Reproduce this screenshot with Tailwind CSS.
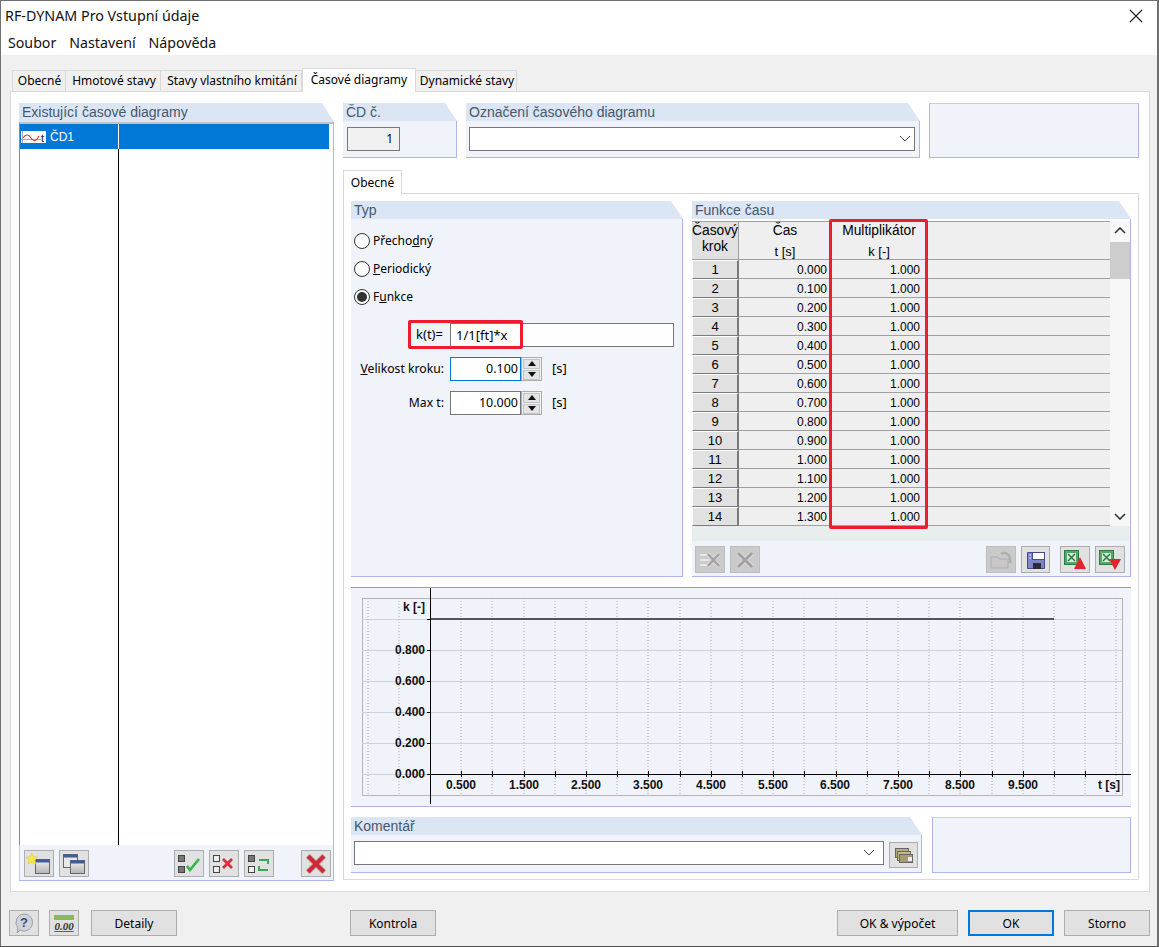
<!DOCTYPE html>
<html>
<head>
<meta charset="utf-8">
<title>RF-DYNAM Pro Vstupní údaje</title>
<script src="https://cdn.jsdelivr.net/npm/@tailwindcss/browser@4"></script>
</head>
<body class="bg-white">
<div class="w-[1159px] h-[947px] border-t border-l border-r-2 border-b border-t-[#707070] border-l-[#707070] border-r-[#707070] border-b-[#505050] flex flex-col font-['Noto_Sans',sans-serif] text-[12px] text-black overflow-hidden">

  <!-- title + menu -->
  <div class="h-[29px] shrink-0 flex items-center justify-between pl-1 pr-[14px] bg-white text-[14.3px] text-[#111]">
    <span>RF-DYNAM Pro Vstupní údaje</span>
    <svg width="14" height="14" viewBox="0 0 14 14"><path d="M1 1 13 13M13 1 1 13" stroke="#222" stroke-width="1.2"/></svg>
  </div>
  <div class="h-[25px] shrink-0 flex items-center gap-[13px] pl-[7px] bg-white text-[14.2px] text-[#111]">
    <span>Soubor</span><span>Nastavení</span><span>Nápověda</span>
  </div>

  <div class="flex-1 bg-[#f0f0f0] flex flex-col pl-[9px] pr-[7px]">
    <!-- main tabs -->
    <div class="h-[36px] shrink-0 flex items-end pl-[2px] relative z-10">
      <div class="h-[21px] w-[54px] flex items-center justify-center pl-px bg-[#f0f0f0] border border-[#d9d9d9] border-b-0">Obecné</div>
      <div class="h-[21px] w-[95px] flex items-center justify-center pl-[2px] bg-[#f0f0f0] border border-l-0 border-[#d9d9d9] border-b-0">Hmotové stavy</div>
      <div class="h-[21px] w-[141px] flex items-center justify-center pl-[2px] bg-[#f0f0f0] border border-l-0 border-[#d9d9d9] border-b-0">Stavy vlastního kmitání</div>
      <div class="h-[24px] w-[114px] -mb-px flex items-start pt-[2px] justify-center bg-white border border-[#d9d9d9] border-b-0">Časové diagramy</div>
      <div class="h-[21px] w-[101px] flex items-center justify-center pl-[2px] bg-[#f0f0f0] border border-l-0 border-[#d9d9d9] border-b-0">Dynamické stavy</div>
    </div>

    <!-- main pane -->
    <div class="h-[801px] w-[1140px] shrink-0 bg-white border border-[#d9d9d9] flex gap-[9px] pl-2 pt-[11px]">

      <!-- left column -->
      <div class="w-[315px] h-[778px] flex flex-col shrink-0">
        <div class="h-[19px] shrink-0 bg-[#dbe5f4] pl-[3px] text-[14px] leading-[18px] text-[#44586c] font-['Liberation_Sans',sans-serif] [clip-path:polygon(0_0,calc(100%-12px)_0,100%_100%,0_100%)]">Existující časové diagramy</div>
        <div class="flex-1 flex flex-col border-r border-b border-[#aeb4ec]">
          <div class="h-[723px] shrink-0 bg-white border-t-2 border-t-[#c4c4c4] border-l border-l-[#8a8a8a] relative">
            <div class="h-[25px] w-[309px] bg-[#0078d7] flex items-center text-white font-['Liberation_Sans',sans-serif]">
              <svg class="ml-px" width="26" height="12" viewBox="0 0 26 12"><rect width="25" height="12" fill="#fff"/><path d="M1.500 0V12M0 8.500H20" stroke="#aaa"/><path d="M2 7 Q6 1 10 7 T18 5" stroke="#e03a3a" stroke-width="1.200" fill="none"/><text x="20" y="11" font-size="11" fill="#111" font-family="Liberation Sans">t</text></svg>
              <span class="ml-[3px]">ČD1</span>
            </div>
            <div class="absolute left-[98px] top-0 bottom-0 w-px bg-black"></div>
            <div class="absolute left-[98px] top-0 h-[25px] w-px bg-white"></div>
          </div>
          <div class="flex-1 bg-[#f0f3f9] border-l border-l-[#c8cbe0] flex items-start pt-[5px] pl-1">
            <button class="w-[30px] h-[27px] bg-[#e1e1e1] border border-[#adadad] flex items-center justify-center">
              <svg width="26" height="22" viewBox="0 0 26 22"><defs><linearGradient id="win" x1="0" y1="0" x2="0" y2="1"><stop offset="0" stop-color="#f2f2f2"/><stop offset="1" stop-color="#b4b4b4"/></linearGradient></defs><rect x="9.500" y="6.500" width="14" height="14" fill="url(#win)" stroke="#666"/><rect x="9.500" y="6.500" width="14" height="3" fill="#3f5c9e"/><path d="M6 0 8 4 12 4 9 7 10 11 6 9 2 11 3 7 0 4 4 4Z" fill="#f7ea3c" stroke="#d4c23a" stroke-width=".5"/></svg>
            </button>
            <button class="w-[30px] h-[27px] ml-[5px] bg-[#e1e1e1] border border-[#adadad] flex items-center justify-center">
              <svg width="24" height="22" viewBox="0 0 24 22"><rect x="1.500" y="1.500" width="14" height="13" fill="#e8e8e8" stroke="#666"/><rect x="1.500" y="1.500" width="14" height="3" fill="#3f5c9e"/><rect x="8.500" y="7.500" width="14" height="13" fill="url(#win)" stroke="#666"/><rect x="8.500" y="7.500" width="14" height="3" fill="#3f5c9e"/></svg>
            </button>
            <button class="w-[30px] h-[27px] ml-[85px] bg-[#e1e1e1] border border-[#adadad] flex items-center justify-center">
              <svg width="26" height="22" viewBox="0 0 26 22"><rect x="2.500" y="2.500" width="6" height="6" fill="#777" stroke="#444"/><rect x="2.500" y="13.500" width="6" height="6" fill="#777" stroke="#444"/><path d="M11 13 14 17 23 6" stroke="#2fb54a" stroke-width="2.600" fill="none"/></svg>
            </button>
            <button class="w-[30px] h-[27px] ml-[5px] bg-[#e1e1e1] border border-[#adadad] flex items-center justify-center">
              <svg width="26" height="22" viewBox="0 0 26 22"><rect x="2.500" y="2.500" width="6" height="6" fill="#eee" stroke="#444"/><rect x="2.500" y="13.500" width="6" height="6" fill="#eee" stroke="#444"/><path d="M12 6 21 15M21 6 12 15" stroke="#d3303a" stroke-width="2.800"/></svg>
            </button>
            <button class="w-[30px] h-[27px] ml-[5px] bg-[#e1e1e1] border border-[#adadad] flex items-center justify-center">
              <svg width="26" height="22" viewBox="0 0 26 22"><rect x="2.500" y="2.500" width="6" height="6" fill="#777" stroke="#444"/><rect x="2.500" y="13.500" width="6" height="6" fill="#eee" stroke="#444"/><path d="M13 7H22V11M22 17H13V13" stroke="#3aa85a" stroke-width="2" fill="none"/></svg>
            </button>
            <button class="w-[30px] h-[27px] ml-[27px] bg-[#e1e1e1] border border-[#adadad] flex items-center justify-center">
              <svg width="22" height="22" viewBox="0 0 22 22"><path d="M3 3 19 19M19 3 3 19" stroke="#b9b0b0" stroke-width="6"/><path d="M3 3 19 19M19 3 3 19" stroke="#cf2a35" stroke-width="4"/></svg>
            </button>
          </div>
        </div>
      </div>

      <!-- right column -->
      <div class="w-[796px] shrink-0 flex flex-col">
        <div class="h-[55px] shrink-0 flex gap-[9px]">
          <div class="w-[114px] flex flex-col">
            <div class="h-[18px] shrink-0 bg-[#dbe5f4] pl-[3px] text-[14px] leading-[18px] text-[#44586c] font-['Liberation_Sans',sans-serif] [clip-path:polygon(0_0,calc(100%-12px)_0,100%_100%,0_100%)]">ČD č.</div>
            <div class="flex-1 bg-[#f0f3f9] border-r border-b border-[#aeb4ec] pl-1 pt-[6px]">
              <div class="w-[53px] h-[24px] bg-[#f0f0f0] border border-[#777] text-right pr-[6px] leading-[22px]">1</div>
            </div>
          </div>
          <div class="w-[454px] flex flex-col">
            <div class="h-[18px] shrink-0 bg-[#dbe5f4] pl-[3px] text-[14px] leading-[18px] text-[#44586c] font-['Liberation_Sans',sans-serif] [clip-path:polygon(0_0,calc(100%-12px)_0,100%_100%,0_100%)]">Označení časového diagramu</div>
            <div class="flex-1 bg-[#f0f3f9] border-r border-b border-[#aeb4ec] pl-[3px] pt-[6px]">
              <div class="w-[446px] h-[24px] bg-white border border-[#777] flex items-center justify-end pr-[3px]">
                <svg width="12" height="8" viewBox="0 0 12 8"><path d="M1 1 6 6 11 1" stroke="#444" fill="none"/></svg>
              </div>
            </div>
          </div>
          <div class="w-[210px] bg-[#f0f3f9] border border-[#aeb4ec] border-t-[#c8cbf0]"></div>
        </div>

        <!-- inner tabs -->
        <div class="mt-[12px] h-[23px] shrink-0 relative z-10">
          <div class="h-[24px] w-[59px] flex items-center justify-center bg-white border border-[#d9d9d9] border-b-0">Obecné</div>
        </div>
        <div class="w-[796px] h-[687px] border border-[#d9d9d9] pl-[7px] pt-[7px]">
          <div class="flex gap-[9px] h-[376px]">

            <!-- typ -->
            <div class="w-[332px] flex flex-col">
              <div class="h-[18px] shrink-0 bg-[#dbe5f4] pl-[3px] text-[14px] leading-[18px] text-[#44586c] font-['Liberation_Sans',sans-serif] [clip-path:polygon(0_0,calc(100%-12px)_0,100%_100%,0_100%)]">Typ</div>
              <div class="flex-1 bg-[#f0f3f9] border-r border-b border-[#aeb4ec] relative">
                <div class="pl-[3px] pt-[14px] flex flex-col gap-[12px]">
                  <div class="h-[16px] flex items-center gap-[3px]"><span class="w-[16px] h-[16px] rounded-full bg-white border border-[#333]"></span><span>Přecho<u>d</u>ný</span></div>
                  <div class="h-[16px] flex items-center gap-[3px]"><span class="w-[16px] h-[16px] rounded-full bg-white border border-[#333]"></span><span><u>P</u>eriodický</span></div>
                  <div class="h-[16px] flex items-center gap-[3px]"><span class="w-[16px] h-[16px] rounded-full bg-white border border-[#333] flex items-center justify-center"><span class="w-[10px] h-[10px] rounded-full bg-[#333]"></span></span><span>F<u>u</u>nkce</span></div>
                </div>
                <div class="ml-[57px] mt-[18px] h-[24px] flex w-[266px] text-[13px]">
                  <div class="w-[42px] flex items-center justify-center pl-px">k(t)=</div>
                  <div class="flex-1 bg-white border border-[#777] pl-[5px] leading-[22px]">1/1[ft]*x</div>
                </div>
                <div class="mt-[10px] h-[24px] flex items-center">
                  <span class="w-[99px] text-right shrink-0 pr-[6px] text-[12.2px]"><u>V</u>elikost kroku:</span>
                  <div class="w-[71px] h-[24px] bg-white border border-[#0078d7] text-right pr-[2px] leading-[22px] text-[12.5px]">0.100</div>
                  <div class="w-[21px] h-[24px] bg-[#f0f0f0] border border-[#adadad] flex flex-col items-center justify-center gap-px">
                    <span class="w-[17px] h-[10px] bg-[#e4e4e4] border border-[#c4c4c4] flex items-center justify-center"><svg width="8" height="5" viewBox="0 0 8 5"><path d="M4 0 8 5H0Z" fill="#111"/></svg></span>
                    <span class="w-[17px] h-[10px] bg-[#e4e4e4] border border-[#c4c4c4] flex items-center justify-center"><svg width="8" height="5" viewBox="0 0 8 5"><path d="M4 5 8 0H0Z" fill="#111"/></svg></span>
                  </div>
                  <span class="ml-[10px] text-[13px]">[s]</span>
                </div>
                <div class="mt-[10px] h-[24px] flex items-center">
                  <span class="w-[99px] text-right shrink-0 pr-[6px] text-[12.2px]">Max t:</span>
                  <div class="w-[71px] h-[24px] bg-white border border-[#777] text-right pr-[2px] leading-[22px] text-[12.5px]">10.000</div>
                  <div class="w-[21px] h-[24px] bg-[#f0f0f0] border border-[#adadad] flex flex-col items-center justify-center gap-px">
                    <span class="w-[17px] h-[10px] bg-[#e4e4e4] border border-[#c4c4c4] flex items-center justify-center"><svg width="8" height="5" viewBox="0 0 8 5"><path d="M4 0 8 5H0Z" fill="#111"/></svg></span>
                    <span class="w-[17px] h-[10px] bg-[#e4e4e4] border border-[#c4c4c4] flex items-center justify-center"><svg width="8" height="5" viewBox="0 0 8 5"><path d="M4 5 8 0H0Z" fill="#111"/></svg></span>
                  </div>
                  <span class="ml-[10px] text-[13px]">[s]</span>
                </div>
                <!-- red highlight -->
                <div class="absolute left-[57px] top-[101px] w-[115px] h-[29px] border-[3px] border-[#ed1c2e] rounded-[2px]"></div>
              </div>
            </div>

            <!-- funkce casu -->
            <div class="w-[439px] flex flex-col">
              <div class="h-[18px] shrink-0 bg-[#dbe5f4] pl-[3px] text-[14px] leading-[18px] text-[#44586c] font-['Liberation_Sans',sans-serif] [clip-path:polygon(0_0,calc(100%-12px)_0,100%_100%,0_100%)]">Funkce času</div>
              <div class="flex-1 bg-[#f0f3f9] border-r border-b border-[#aeb4ec] relative font-['Liberation_Sans',sans-serif] flex flex-col">
                <div class="h-[307px] shrink-0 pt-[2px] flex bg-white">
                  <div class="w-[418px] shrink-0 bg-[#efefef] border-t border-[#a0a0a0]" id="rows">
                    <div class="h-[38px] flex border-b border-[#a0a0a0] text-center text-[13.8px]">
                      <div class="w-[47px] shrink-0 bg-[#e1e1e1] border-r border-[#a0a0a0] leading-[16px] pt-px whitespace-nowrap">Časový<br>krok</div>
                      <div class="w-[92px] shrink-0 leading-[21px] -mt-[2px]">Čas<br><span class="text-[13px]">t [s]</span></div>
                      <div class="w-[96px] shrink-0 leading-[21px] -mt-[2px]">Multiplikátor<br><span class="text-[13px]">k [-]</span></div>
                    </div>
                  </div>
                  <div class="flex-1 flex flex-col items-center bg-[#f7f7f7] pt-[6px]">
                    <svg width="12" height="7" viewBox="0 0 12 7"><path d="M1 6 6 1 11 6" stroke="#333" stroke-width="1.600" fill="none"/></svg>
                    <div class="w-full h-[37px] bg-[#cdcdcd] mt-[8px]"></div>
                    <svg class="mt-auto mb-[6px]" width="12" height="7" viewBox="0 0 12 7"><path d="M1 1 6 6 11 1" stroke="#333" stroke-width="1.600" fill="none"/></svg>
                  </div>
                </div>
                <div class="h-[15px] shrink-0 bg-[#e8eeee]"></div>
                <div class="flex items-start pt-[5px] pl-[3px]">
                  <button class="w-[30px] h-[27px] bg-[#cacaca] border border-[#bdbdbd] flex items-center justify-center">
                    <svg width="22" height="20" viewBox="0 0 22 20"><path d="M1 5H10M1 10H10M1 15H10" stroke="#e8e8e8" stroke-width="2"/><path d="M9 4 20 16M20 4 9 16" stroke="#dcdcdc" stroke-width="4.500"/><path d="M9 4 20 16M20 4 9 16" stroke="#a2a2a2" stroke-width="2.500"/></svg>
                  </button>
                  <button class="w-[30px] h-[27px] ml-[5px] bg-[#cacaca] border border-[#bdbdbd] flex items-center justify-center">
                    <svg width="20" height="20" viewBox="0 0 20 20"><path d="M3 3 17 17M17 3 3 17" stroke="#dcdcdc" stroke-width="5"/><path d="M3 3 17 17M17 3 3 17" stroke="#a2a2a2" stroke-width="3"/></svg>
                  </button>
                  <button class="w-[30px] h-[27px] ml-[226px] bg-[#cacaca] border border-[#bdbdbd] flex items-center justify-center">
                    <svg width="24" height="20" viewBox="0 0 24 20"><path d="M2 7H9L11 9H19V18H2Z" fill="#c8c8c8" stroke="#adadad"/><path d="M12 4C18 1 22 6 21 13" stroke="#adadad" stroke-width="2.500" fill="none"/></svg>
                  </button>
                  <button class="w-[29px] h-[27px] ml-[5px] bg-[#e1e1e1] border border-[#adadad] flex items-center justify-center">
                    <svg width="20" height="20" viewBox="0 0 20 20"><path d="M1.500 2.500H18.500V18.500H1.500Z" fill="#7d84cc" stroke="#444b8c"/><rect x="6.500" y="2.500" width="12" height="7" fill="#fff" stroke="#444b8c"/><rect x="7" y="13" width="8" height="6" fill="#2a2a3a"/><path d="M3 5H5M3 8H5" stroke="#dde"/></svg>
                  </button>
                  <button class="w-[30px] h-[27px] ml-[10px] bg-[#e1e1e1] border border-[#adadad] flex items-center justify-center">
                    <svg width="24" height="22" viewBox="0 0 24 22"><rect x="1.500" y="1.500" width="14" height="14" fill="#55a866" stroke="#2f7a46"/><rect x="4" y="4" width="9" height="9" fill="#d8ead9"/><path d="M5 5 12 12M12 5 5 12" stroke="#2a7a42" stroke-width="1.500"/><path d="M17 8 23 20H11Z" fill="#e3232c"/></svg>
                  </button>
                  <button class="w-[30px] h-[27px] ml-[5px] bg-[#e1e1e1] border border-[#adadad] flex items-center justify-center">
                    <svg width="24" height="22" viewBox="0 0 24 22"><rect x="1.500" y="1.500" width="14" height="14" fill="#55a866" stroke="#2f7a46"/><rect x="4" y="4" width="9" height="9" fill="#d8ead9"/><path d="M5 5 12 12M12 5 5 12" stroke="#2a7a42" stroke-width="1.500"/><path d="M17 21 23 10H11Z" fill="#e3232c"/></svg>
                  </button>
                </div>
                <!-- red highlight -->
                <div class="absolute left-[137px] top-0 w-[99px] h-[310px] border-[3px] border-[#ed1c2e] rounded-[2px]"></div>
              </div>
            </div>
          </div>

          <!-- chart -->
          <svg class="block mt-[10px]" width="781" height="220" viewBox="351 587 781 220" font-family="Liberation Sans" font-weight="bold" font-size="12" fill="#111">
            <rect x="351" y="587" width="780" height="219" fill="#f0f3f9"/>
            <path d="M351 587.500H1131" stroke="#a0a0a0"/>
            <path d="M351 806.500H1131" stroke="#aeb4ec"/>
            <rect x="362.500" y="598.500" width="760" height="197" fill="none" stroke="#b4b4b4"/>
            <path d="M362 619.500H1122M362 650.500H1122M362 681.500H1122M362 712.500H1122M362 743.500H1122M362 774.500H427" stroke="#cfd2d6"/>
            <path d="M368 598V795M399 598V795M461 598V795M492 598V795M524 598V795M555 598V795M586 598V795M617 598V795M648 598V795M680 598V795M711 598V795M742 598V795M773 598V795M804 598V795M836 598V795M867 598V795M898 598V795M929 598V795M960 598V795M992 598V795M1023 598V795M1054 598V795M1085 598V795M1116 598V795" stroke="#aaa" stroke-dasharray="1 2"/>
            <path d="M430 619H1054" stroke="#555" stroke-width="2"/>
            <path d="M430.500 588V804M427 774.500H1131" stroke="#000"/>
            <path d="M427 619.500H430M427 650.500H430M427 681.500H430M427 712.500H430M427 743.500H430M461.500 771V777M492.500 771V777M524.500 771V777M555.500 771V777M586.500 771V777M617.500 771V777M648.500 771V777M680.500 771V777M711.500 771V777M742.500 771V777M773.500 771V777M804.500 771V777M836.500 771V777M867.500 771V777M898.500 771V777M929.500 771V777M960.500 771V777M992.500 771V777M1023.500 771V777M1054.500 771V777M1085.500 771V777" stroke="#000"/>
            <g text-anchor="end">
              <text x="425" y="611">k [-]</text>
              <text x="425" y="654">0.800</text>
              <text x="425" y="685">0.600</text>
              <text x="425" y="716">0.400</text>
              <text x="425" y="747">0.200</text>
              <text x="425" y="778">0.000</text>
              <text x="1120" y="789">t [s]</text>
            </g>
            <g text-anchor="middle">
              <text x="461" y="789">0.500</text>
              <text x="524" y="789">1.500</text>
              <text x="586" y="789">2.500</text>
              <text x="648" y="789">3.500</text>
              <text x="711" y="789">4.500</text>
              <text x="773" y="789">5.500</text>
              <text x="835" y="789">6.500</text>
              <text x="898" y="789">7.500</text>
              <text x="960" y="789">8.500</text>
              <text x="1023" y="789">9.500</text>
            </g>
          </svg>

          <!-- komentar -->
          <div class="flex gap-[10px] mt-[10px] h-[56px]">
            <div class="w-[571px] flex flex-col">
              <div class="h-[18px] shrink-0 bg-[#dbe5f4] pl-[3px] text-[14px] leading-[18px] text-[#44586c] font-['Liberation_Sans',sans-serif] [clip-path:polygon(0_0,calc(100%-12px)_0,100%_100%,0_100%)]">Komentář</div>
              <div class="flex-1 bg-[#f0f3f9] border-r border-b border-[#aeb4ec] pl-[3px] pt-[6px] flex items-start">
                <div class="w-[530px] h-[24px] bg-white border border-[#777] flex items-center justify-end pr-[8px]">
                  <svg width="12" height="8" viewBox="0 0 12 8"><path d="M1 1 6 6 11 1" stroke="#444" fill="none"/></svg>
                </div>
                <button class="w-[29px] h-[26px] ml-[5px] mt-px bg-[#e1e1e1] border border-[#adadad] flex items-center justify-center">
                  <svg width="20" height="18" viewBox="0 0 20 18"><rect x="1.500" y="2.500" width="13" height="9" fill="#b9ad80" stroke="#666"/><rect x="3.500" y="5.500" width="13" height="9" fill="#c4b88c" stroke="#666"/><rect x="5.500" y="8.500" width="13" height="8" fill="#a89c6c" stroke="#666"/><rect x="14" y="11" width="4" height="4" fill="#eee"/></svg>
                </button>
              </div>
            </div>
            <div class="w-[199px] bg-[#f0f3f9] border border-[#aeb4ec] border-t-[#c8cbf0]"></div>
          </div>
        </div>
      </div>
    </div>

    <!-- footer -->
    <div class="flex items-start pt-[18px] -ml-px">
      <button class="w-[30px] h-[26px] bg-[#e1e1e1] border border-[#adadad] flex items-center justify-center">
        <svg width="22" height="22" viewBox="0 0 22 22"><path d="M11 2A8.500 8.500 0 1 1 7 18L4 21 5 16A8.500 8.500 0 0 1 11 2Z" fill="#cfd3da" stroke="#9a9ea8"/><text x="11" y="15" text-anchor="middle" font-size="13" font-weight="bold" fill="#3b4a80" font-family="Liberation Sans">?</text></svg>
      </button>
      <button class="w-[30px] h-[26px] ml-[10px] bg-[#e1e1e1] border border-[#adadad] flex flex-col items-center justify-center font-['Liberation_Serif',serif] font-bold italic text-[11px] leading-[12px] text-[#333]">
        <span class="w-[20px] h-[5px] bg-[#8cb85c]"></span>
        <span class="underline decoration-[#4a5aa0]">0.00</span>
      </button>
      <button class="w-[86px] h-[26px] ml-[12px] pt-px bg-[#e1e1e1] border border-[#adadad]">Detaily</button>
      <button class="w-[86px] h-[26px] ml-[173px] pt-px bg-[#e1e1e1] border border-[#adadad]">Kontrola</button>
      <button class="w-[121px] h-[26px] ml-[401px] pt-px bg-[#e1e1e1] border border-[#adadad]">OK &amp; výpočet</button>
      <button class="w-[86px] h-[26px] ml-[10px] pt-px bg-[#e1e1e1] border-2 border-[#0078d7]">OK</button>
      <button class="w-[86px] h-[26px] ml-[10px] pt-px bg-[#e1e1e1] border border-[#adadad]">Storno</button>
    </div>
  </div>
</div>
<script>
  // table rows
  var rows = document.getElementById('rows');
  for (var i = 0; i < 14; i++) {
    var row = document.createElement('div');
    row.className = 'h-[19px] flex leading-[21px]';
    row.innerHTML = '<div class="w-[47px] shrink-0 bg-[#e1e1e1] text-center text-[13px] border-t border-l border-b border-t-white border-l-white border-b-[#7a7a7a] border-r-2 border-r-[#7a7a7a] leading-[17px]">' + (i + 1) + '</div>' +
      '<div class="w-[92px] shrink-0 text-right pr-[4px] border-b border-[#a0a0a0]">' + (i / 10).toFixed(3) + '</div>' +
      '<div class="w-[96px] shrink-0 text-right pr-[7px] border-b border-[#a0a0a0]">1.000</div>' +
      '<div class="flex-1 border-b border-[#a0a0a0]"></div>';
    rows.appendChild(row);
  }
</script>
</body>
</html>
